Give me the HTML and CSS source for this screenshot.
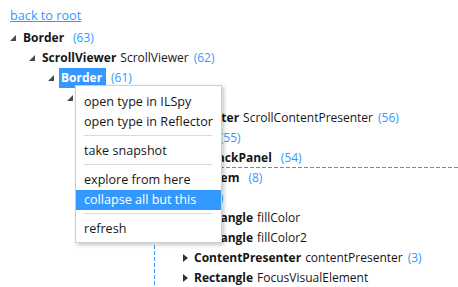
FILE: index.html
```html
<!DOCTYPE html>
<html lang="en">
<head>
    <meta charset="UTF-8">
    <meta name="viewport" content="width=device-width, initial-scale=1.0">
    <title>Visual tree</title>
    <link rel="stylesheet" href="styles.css">
</head>
<body>
    <div class="page">
        <div class="top">
            <a class="back" href="#">back to root</a>
        </div>

        <ul class="tree">
            <li>
                <div class="row"><span class="arrow open"></span><span class="type">Border</span><span class="count">(63)</span></div>
                <ul>
                    <li>
                        <div class="row"><span class="arrow open"></span><span class="type">ScrollViewer</span><span class="name">ScrollViewer</span><span class="count">(62)</span></div>
                        <ul>
                            <li>
                                <div class="row"><span class="arrow open"></span><span class="type selected">Border</span><span class="count">(61)</span></div>
                                <ul>
                                    <li>
                                        <div class="row"><span class="arrow open"></span><span class="type">Grid</span><span class="count">(60)</span></div>
                                        <ul>
                                            <li>
                                                <div class="row"><span class="arrow open"></span><span class="type">ScrollContentPresenter</span><span class="name">ScrollContentPresenter</span><span class="count">(56)</span></div>
                                                <ul>
                                                    <li>
                                                        <div class="row"><span class="arrow open"></span><span class="type">ItemsPresenter</span><span class="count">(55)</span></div>
                                                        <ul>
                                                            <li>
                                                                <div class="row"><span class="arrow open"></span><span class="type">VirtualizingStackPanel</span><span class="count">(54)</span></div>
                                                                <ul>
                                                                    <li>
                                                                        <div class="row"><span class="arrow open"></span><span class="type">TreeViewItem</span><span class="count">(8)</span></div>
                                                                        <ul>
                                                                            <li>
                                                                                <div class="row"><span class="arrow open"></span><span class="type">Grid</span><span class="count">(7)</span></div>
                                                                                <ul>
                                                                                    <li><div class="row"><span class="arrow"></span><span class="type">Rectangle</span><span class="name">fillColor</span></div></li>
                                                                                    <li><div class="row"><span class="arrow"></span><span class="type">Rectangle</span><span class="name">fillColor2</span></div></li>
                                                                                    <li><div class="row"><span class="arrow closed"></span><span class="type">ContentPresenter</span><span class="name">contentPresenter</span><span class="count">(3)</span></div></li>
                                                                                    <li><div class="row"><span class="arrow closed"></span><span class="type">Rectangle</span><span class="name">FocusVisualElement</span></div></li>
                                                                                </ul>
                                                                            </li>
                                                                        </ul>
                                                                    </li>
                                                                </ul>
                                                            </li>
                                                        </ul>
                                                    </li>
                                                </ul>
                                            </li>
                                        </ul>
                                    </li>
                                </ul>
                            </li>
                        </ul>
                    </li>
                </ul>
            </li>
        </ul>

        <!-- bounds of the selected element -->
        <svg class="bounds" width="304" height="120">
            <line x1="0" y1="0.5" x2="304" y2="0.5"/>
            <line x1="0.5" y1="0" x2="0.5" y2="120"/>
        </svg>

        <div class="menu">
            <div class="item">open type in ILSpy</div>
            <div class="item">open type in Reflector</div>
            <div class="sep"></div>
            <div class="item">take snapshot</div>
            <div class="sep"></div>
            <div class="item">explore from here</div>
            <div class="item active">collapse all but this</div>
            <div class="sep"></div>
            <div class="item">refresh</div>
        </div>
    </div>
</body>
</html>
```

FILE: styles.css
```css
body {
    margin: 0;
    padding: 0;
    background: #fff;
    font-family: "Open Sans", "Noto Sans", sans-serif;
    font-size: 12px;
    color: #161616;
}

.page {
    position: relative;
    width: 458px;
    height: 287px;
    overflow: hidden;
}

.top {
    height: 28px;
    padding-left: 10px;
    box-sizing: border-box;
    padding-top: 7px;
}

.back {
    font-size: 12.7px;
    line-height: 16px;
    color: #3399ff;
    text-decoration: underline;
}

/* tree */
.tree,
.tree ul {
    list-style: none;
    margin: 0;
    padding: 0;
}

.tree {
    padding-left: 10px;
}

.tree ul {
    padding-left: 19px;
}

.row {
    display: flex;
    align-items: center;
    height: 20px;
    line-height: 20px;
    white-space: nowrap;
}

.arrow {
    position: relative;
    width: 11px;
    height: 20px;
    flex: none;
}

.arrow.open::before {
    content: "";
    position: absolute;
    left: 0;
    top: 7px;
    border-style: solid;
    border-width: 0 0 6px 6px;
    border-color: transparent transparent #4a4a4a transparent;
}

.arrow.closed::before {
    content: "";
    position: absolute;
    left: 2px;
    top: 6px;
    border-style: solid;
    border-width: 4px 0 4px 5px;
    border-color: transparent transparent transparent #333;
}

.type {
    font-weight: bold;
    padding: 0 4px 0 2px;
}

.type.selected {
    background: #3399ff;
    color: #fff;
}

.count {
    margin-left: 5px;
    color: #3399ff;
}

.bounds {
    position: absolute;
    left: 154px;
    top: 167px;
}

.bounds line {
    stroke: #3399ff;
    stroke-width: 1;
    stroke-dasharray: 4 2;
}

/* context menu */
.menu {
    position: absolute;
    left: 75px;
    top: 85px;
    width: 147px;
    box-sizing: border-box;
    padding: 6px 0 3px;
    background: #fff;
    border: 1px solid #cfcfcf;
    box-shadow: 2px 2px 4px rgba(0, 0, 0, 0.22);
    font-size: 12.6px;
}

.item {
    height: 20px;
    line-height: 20px;
    padding-left: 8px;
    color: #161616;
    white-space: nowrap;
}

.item.active {
    background: #3399ff;
    color: #fff;
}

.sep {
    height: 9px;
    margin: 0 9px 0 8px;
    position: relative;
}

.sep::after {
    content: "";
    position: absolute;
    left: 0;
    right: 0;
    top: 3px;
    border-top: 1px solid #dadada;
}
```
